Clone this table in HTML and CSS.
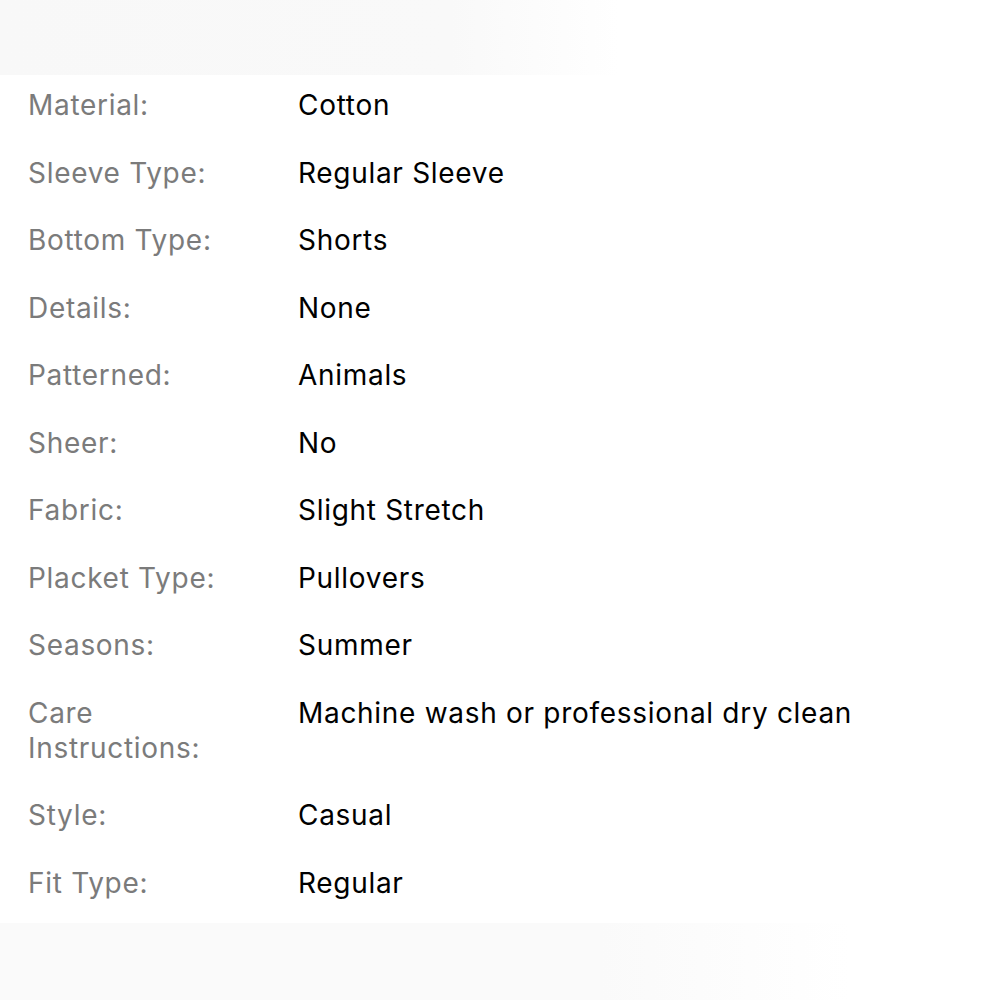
FILE: index.html
```html
<!DOCTYPE html>
<html lang="en">
<head>
    <meta charset="UTF-8">
    <meta name="viewport" content="width=device-width, initial-scale=1.0">
    <title>Product Details</title>
    <link rel="stylesheet" href="styles.css">
</head>
<body>

    <!-- Franja superior -->
    <div class="band band-top"></div>

    <!-- Tabla de especificaciones -->
    <div class="specs">
        <div class="row"><div class="label">Material:</div><div class="value">Cotton</div></div>
        <div class="row"><div class="label">Sleeve Type:</div><div class="value">Regular Sleeve</div></div>
        <div class="row"><div class="label">Bottom Type:</div><div class="value">Shorts</div></div>
        <div class="row"><div class="label">Details:</div><div class="value">None</div></div>
        <div class="row"><div class="label">Patterned:</div><div class="value">Animals</div></div>
        <div class="row"><div class="label">Sheer:</div><div class="value">No</div></div>
        <div class="row"><div class="label">Fabric:</div><div class="value">Slight Stretch</div></div>
        <div class="row"><div class="label">Placket Type:</div><div class="value">Pullovers</div></div>
        <div class="row"><div class="label">Seasons:</div><div class="value">Summer</div></div>
        <div class="row"><div class="label">Care<br>Instructions:</div><div class="value">Machine wash or professional dry clean</div></div>
        <div class="row"><div class="label">Style:</div><div class="value">Casual</div></div>
        <div class="row"><div class="label">Fit Type:</div><div class="value">Regular</div></div>
    </div>

    <!-- Franja inferior -->
    <div class="band band-bottom"></div>

</body>
</html>
```

FILE: styles.css
```css
body {
    margin: 0;
    background: #ffffff;
    font-family: Inter, "Liberation Sans", sans-serif;
    -webkit-font-smoothing: antialiased;
}

/* Franjas grises */
.band {
    background: linear-gradient(to right, #f8f8f8 0%, #f9f9f9 45%, #ffffff 62%);
}

.band-top {
    height: 75px;
}

.band-bottom {
    height: 78px;
    background: linear-gradient(to right, #fafafa 0%, #fafafa 60%, #ffffff 85%);
}

/* Tabla */
.specs {
    padding: 13px 0 22px 28px;
    display: flex;
    flex-direction: column;
    gap: 32.5px;
}

.row {
    display: grid;
    grid-template-columns: 270px 1fr;
    font-size: 28px;
    line-height: 35px;
    letter-spacing: 0.7px;
}

.label {
    color: #7b7b7b;
}

.value {
    color: #000000;
}
```
